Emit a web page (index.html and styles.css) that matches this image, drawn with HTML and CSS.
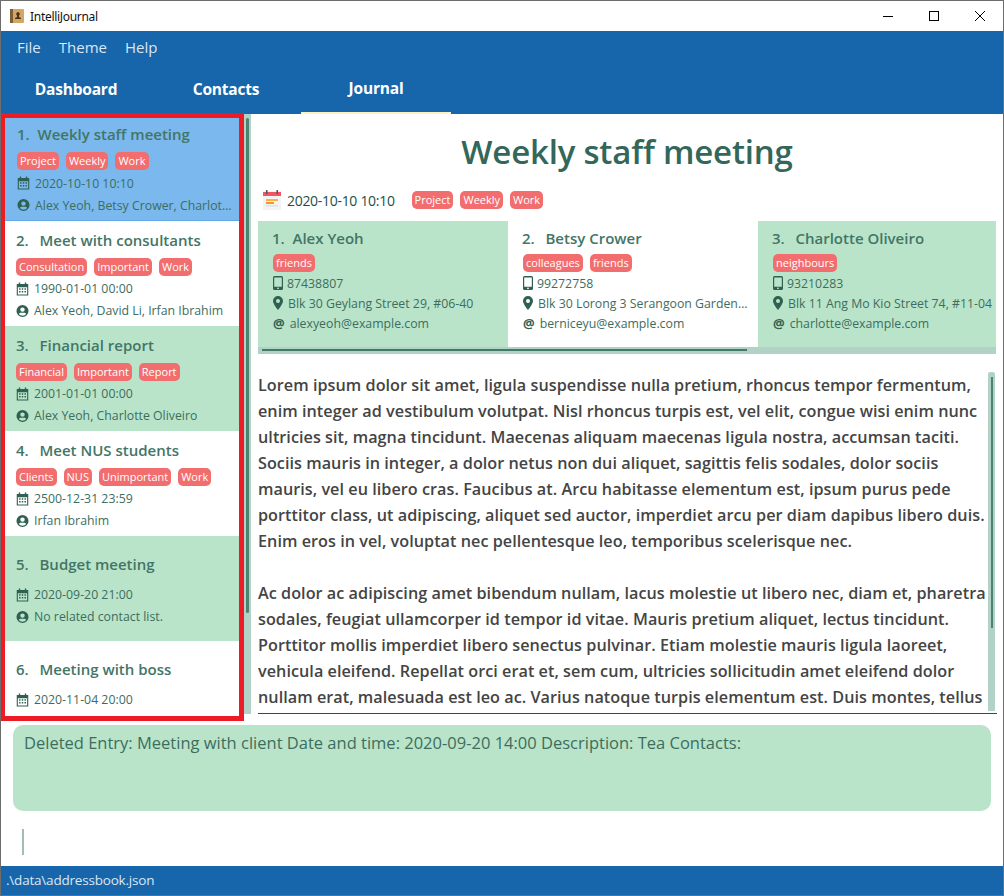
FILE: index.html
```html
<!DOCTYPE html>
<html lang="en">

<head>
    <meta charset="UTF-8">
    <title>IntelliJournal</title>
    <link rel="stylesheet" href="styles.css">
</head>

<body>
    <svg class="defs" width="0" height="0">
        <symbol id="cal" viewBox="0 0 14 14">
            <path fill="currentColor" d="M3 0h1.5v1.5h5V0H11v1.5h2.2V14H.8V1.5H3zM2 5v7.8h10V5z" />
            <path fill="currentColor" d="M3.3 6.3h1.6v1.5H3.3zM6.2 6.3h1.6v1.5H6.2zM9.100 6.300h1.600v1.500H9.100zM3.300 9.200h1.600v1.500H3.300zM6.200 9.200h1.600v1.500H6.200zM9.100 9.200h1.600v1.500H9.100z" />
        </symbol>
        <symbol id="person" viewBox="0 0 14 14">
            <path fill="currentColor" d="M7 .5a6.500 6.500 0 1 0 0 13 6.500 6.500 0 0 0 0-13zm0 2.600a2.400 2.400 0 1 1 0 4.800 2.400 2.400 0 0 1 0-4.800zm0 9.100a5.200 5.200 0 0 1-4-1.900c.5-1 1.500-1.500 2.500-1.500h3c1 0 2 .5 2.500 1.500a5.200 5.200 0 0 1-4 1.900z" />
        </symbol>
        <symbol id="phone" viewBox="0 0 10 14">
            <path fill="currentColor" d="M1.500 0h7A1.500 1.500 0 0 1 10 1.500v11A1.500 1.500 0 0 1 8.500 14h-7A1.500 1.500 0 0 1 0 12.500v-11A1.500 1.500 0 0 1 1.500 0zm-.3 1.500v9.300h7.600V1.500zM5 11.400a.9.900 0 1 0 0 1.800.9.900 0 0 0 0-1.800z" />
        </symbol>
        <symbol id="pin" viewBox="0 0 10 14">
            <path fill="currentColor" d="M5 0a5 5 0 0 1 5 5c0 2.500-3 6.500-5 9-2-2.500-5-6.500-5-9a5 5 0 0 1 5-5zm0 3a2 2 0 1 0 0 4 2 2 0 0 0 0-4z" />
        </symbol>
    </svg>

    <div class="window">
        <header class="titlebar">
            <svg class="appicon" width="14" height="14" viewBox="0 0 14 14">
                <rect width="14" height="14" rx="1" fill="#d4a664" />
                <rect width="3" height="14" fill="#7a6038" />
                <path fill="#4a3518" d="M8 3a2 2 0 0 1 1 3.600V8l2 1v1H5V9l2-1V6.600A2 2 0 0 1 8 3z" />
            </svg>
            <span class="apptitle">IntelliJournal</span>
            <div class="winbtns">
                <svg width="46" height="30" viewBox="0 0 46 30"><path stroke="#000" d="M18 15.500h10" /></svg>
                <svg width="46" height="30" viewBox="0 0 46 30"><rect x="18.500" y="10.500" width="9" height="9" fill="none" stroke="#000" /></svg>
                <svg width="46" height="30" viewBox="0 0 46 30"><path stroke="#000" d="M18 10l10 10M28 10L18 20" /></svg>
            </div>
        </header>

        <div class="topbar">
            <nav class="menu">
                <span>File</span>
                <span>Theme</span>
                <span>Help</span>
            </nav>
            <nav class="tabs">
                <span class="tab">Dashboard</span>
                <span class="tab">Contacts</span>
                <span class="tab active">Journal</span>
            </nav>
        </div>

        <div class="split">
            <aside class="entries">
                <div class="entry selected">
                    <div class="entry-title"><span class="num one">1.</span>&nbsp; Weekly staff meeting</div>
                    <div class="tags"><span class="tag">Project</span><span class="tag">Weekly</span><span class="tag">Work</span></div>
                    <div class="meta"><svg class="ico"><use href="#cal" /></svg>2020-10-10 10:10</div>
                    <div class="meta"><svg class="ico"><use href="#person" /></svg><span class="clip">Alex Yeoh, Betsy Crower, Charlotte Oliveiro</span></div>
                </div>
                <div class="entry">
                    <div class="entry-title"><span class="num">2.</span>&nbsp; Meet with consultants</div>
                    <div class="tags"><span class="tag">Consultation</span><span class="tag">Important</span><span class="tag">Work</span></div>
                    <div class="meta"><svg class="ico"><use href="#cal" /></svg>1990-01-01 00:00</div>
                    <div class="meta"><svg class="ico"><use href="#person" /></svg><span class="clip">Alex Yeoh, David Li, Irfan Ibrahim</span></div>
                </div>
                <div class="entry green">
                    <div class="entry-title"><span class="num">3.</span>&nbsp; Financial report</div>
                    <div class="tags"><span class="tag">Financial</span><span class="tag">Important</span><span class="tag">Report</span></div>
                    <div class="meta"><svg class="ico"><use href="#cal" /></svg>2001-01-01 00:00</div>
                    <div class="meta"><svg class="ico"><use href="#person" /></svg><span class="clip">Alex Yeoh, Charlotte Oliveiro</span></div>
                </div>
                <div class="entry">
                    <div class="entry-title"><span class="num">4.</span>&nbsp; Meet NUS students</div>
                    <div class="tags"><span class="tag">Clients</span><span class="tag">NUS</span><span class="tag">Unimportant</span><span class="tag">Work</span></div>
                    <div class="meta"><svg class="ico"><use href="#cal" /></svg>2500-12-31 23:59</div>
                    <div class="meta"><svg class="ico"><use href="#person" /></svg><span class="clip">Irfan Ibrahim</span></div>
                </div>
                <div class="entry green">
                    <div class="entry-title"><span class="num">5.</span>&nbsp; Budget meeting</div>
                    <div class="tags"></div>
                    <div class="meta"><svg class="ico"><use href="#cal" /></svg>2020-09-20 21:00</div>
                    <div class="meta"><svg class="ico"><use href="#person" /></svg><span class="clip">No related contact list.</span></div>
                </div>
                <div class="entry">
                    <div class="entry-title"><span class="num">6.</span>&nbsp; Meeting with boss</div>
                    <div class="tags"></div>
                    <div class="meta"><svg class="ico"><use href="#cal" /></svg>2020-11-04 20:00</div>
                    <div class="meta"><svg class="ico"><use href="#person" /></svg></div>
                </div>
            </aside>

            <div class="vbar">
                <div class="vbar-thumb"></div>
            </div>

            <main class="detail">
                <h1 class="detail-title">Weekly staff meeting</h1>
                <div class="detail-when">
                    <svg class="calcolor" width="18" height="20" viewBox="0 0 18 20">
                        <rect y="1" width="18" height="19" fill="#f3f3f3" />
                        <rect y="2" width="18" height="4" fill="#ef5566" />
                        <rect x="3" width="1.500" height="4" fill="#44546a" />
                        <rect x="13.500" width="1.500" height="4" fill="#44546a" />
                        <rect x="3" y="9" width="12" height="2" fill="#fbb040" />
                        <rect x="3" y="12" width="8" height="2" fill="#f59331" />
                        <rect x="3" y="15" width="12" height="1.500" fill="#e2e2e2" />
                    </svg>
                    <span class="when-text">2020-10-10 10:10</span>
                    <div class="tags when-tags"><span class="tag">Project</span><span class="tag">Weekly</span><span class="tag">Work</span></div>
                </div>

                <div class="contacts">
                    <div class="cards">
                        <div class="card green">
                            <div class="card-name"><span class="num one">1.</span>&nbsp; Alex Yeoh</div>
                            <div class="tags"><span class="tag">friends</span></div>
                            <div class="meta"><svg class="ico ico-phone"><use href="#phone" /></svg>87438807</div>
                            <div class="meta"><svg class="ico ico-pin"><use href="#pin" /></svg>Blk 30 Geylang Street 29, #06-40</div>
                            <div class="meta"><b class="at">@</b>alexyeoh@example.com</div>
                        </div>
                        <div class="card">
                            <div class="card-name"><span class="num">2.</span>&nbsp; Betsy Crower</div>
                            <div class="tags"><span class="tag">colleagues</span><span class="tag">friends</span></div>
                            <div class="meta"><svg class="ico ico-phone"><use href="#phone" /></svg>99272758</div>
                            <div class="meta"><svg class="ico ico-pin"><use href="#pin" /></svg><span class="clip">Blk 30 Lorong 3 Serangoon Gardens, #07-18</span></div>
                            <div class="meta"><b class="at">@</b>berniceyu@example.com</div>
                        </div>
                        <div class="card green">
                            <div class="card-name"><span class="num">3.</span>&nbsp; Charlotte Oliveiro</div>
                            <div class="tags"><span class="tag">neighbours</span></div>
                            <div class="meta"><svg class="ico ico-phone"><use href="#phone" /></svg>93210283</div>
                            <div class="meta"><svg class="ico ico-pin"><use href="#pin" /></svg>Blk 11 Ang Mo Kio Street 74, #11-04</div>
                            <div class="meta"><b class="at">@</b>charlotte@example.com</div>
                        </div>
                    </div>
                    <div class="hbar">
                        <div class="hbar-thumb"></div>
                    </div>
                </div>

                <div class="notes">
                    <div class="notes-text">
                        <div>Lorem ipsum dolor sit amet, ligula suspendisse nulla pretium, rhoncus tempor fermentum,</div>
                        <div>enim integer ad vestibulum volutpat. Nisl rhoncus turpis est, vel elit, congue wisi enim nunc</div>
                        <div>ultricies sit, magna tincidunt. Maecenas aliquam maecenas ligula nostra, accumsan taciti.</div>
                        <div>Sociis mauris in integer, a dolor netus non dui aliquet, sagittis felis sodales, dolor sociis</div>
                        <div>mauris, vel eu libero cras. Faucibus at. Arcu habitasse elementum est, ipsum purus pede</div>
                        <div>porttitor class, ut adipiscing, aliquet sed auctor, imperdiet arcu per diam dapibus libero duis.</div>
                        <div>Enim eros in vel, voluptat nec pellentesque leo, temporibus scelerisque nec.</div>
                        <div>&nbsp;</div>
                        <div>Ac dolor ac adipiscing amet bibendum nullam, lacus molestie ut libero nec, diam et, pharetra</div>
                        <div>sodales, feugiat ullamcorper id tempor id vitae. Mauris pretium aliquet, lectus tincidunt.</div>
                        <div>Porttitor mollis imperdiet libero senectus pulvinar. Etiam molestie mauris ligula laoreet,</div>
                        <div>vehicula eleifend. Repellat orci erat et, sem cum, ultricies sollicitudin amet eleifend dolor</div>
                        <div>nullam erat, malesuada est leo ac. Varius natoque turpis elementum est. Duis montes, tellus</div>
                    </div>
                    <div class="notes-bar">
                        <div class="notes-thumb"></div>
                    </div>
                </div>
            </main>
        </div>

        <div class="result">Deleted Entry: Meeting with client Date and time: 2020-09-20 14:00 Description: Tea Contacts:</div>

        <div class="command">
            <div class="caret"></div>
        </div>

        <footer class="status">.\data\addressbook.json</footer>

        <!-- red annotation box -->
        <div class="redbox"></div>
    </div>
</body>

</html>
```

FILE: styles.css
```css
* {
    box-sizing: border-box;
}

html,
body {
    margin: 0;
    height: 100%;
}

body {
    font-family: "Open Sans", "Noto Sans", sans-serif;
    overflow: hidden;
}

.defs {
    position: absolute;
}

.window {
    position: relative;
    width: 1004px;
    height: 896px;
    display: flex;
    flex-direction: column;
    border: 1px solid #6d6d6d;
    background: white;
    overflow: hidden;
}

/* title bar */
.titlebar {
    height: 30px;
    flex: none;
    display: flex;
    align-items: center;
    padding-left: 9px;
    background: white;
}

.apptitle {
    margin-left: 6px;
    font-family: "Noto Sans", sans-serif;
    font-size: 12px;
    letter-spacing: -0.3px;
    color: #111;
}

.winbtns {
    margin-left: auto;
    display: flex;
}

/* menu + tabs */
.topbar {
    height: 83px;
    flex: none;
    background: #1766ab;
    color: white;
}

.menu {
    height: 33px;
    display: flex;
    align-items: center;
    gap: 18px;
    padding-left: 16px;
    padding-bottom: 2px;
    font-size: 15px;
    color: #dbe7f2;
}

.tabs {
    height: 50px;
    display: flex;
}

.tab {
    width: 150px;
    display: flex;
    align-items: center;
    justify-content: center;
    font-size: 15.500px;
    font-weight: 700;
    letter-spacing: -0.2px;
}

.tab.active {
    border-bottom: 2px solid #fdf2c0;
}

/* main split */
.split {
    height: 600px;
    flex: none;
    display: flex;
}

.entries {
    width: 243px;
    flex: none;
    padding-left: 4px;
    padding-right: 5px;
    padding-top: 2px;
    overflow: hidden;
}

.entry {
    height: 105px;
    padding-top: 3px;
    padding-left: 11px;
    padding-right: 6px;
    display: flex;
    flex-direction: column;
    justify-content: center;
    color: #437566;
    background: white;
}

.entry.green,
.card.green {
    background: #b9e4c9;
}

.entry.selected {
    padding-left: 12px;
    background: #7ab8ed;
    border-bottom: 1px solid #5fa8ea;
}

.entry-title {
    font-size: 15px;
    font-weight: 600;
    line-height: 22px;
    white-space: nowrap;
    margin-bottom: 7px;
}

.num {
    margin-right: 3px;
}

.num.one {
    margin-right: 0;
}

.tags {
    display: flex;
    gap: 7px;
}

.tag {
    height: 18px;
    line-height: 18px;
    padding: 0 3px;
    border-radius: 5px;
    background: #f26d6d;
    color: white;
    font-size: 11px;
    white-space: nowrap;
}

.meta {
    height: 22px;
    display: flex;
    align-items: center;
    font-size: 12.300px;
    white-space: nowrap;
    color: #3d6d5e;
}

.entry .tags + .meta {
    margin-top: 2px;
}

.ico {
    width: 13px;
    height: 14px;
    flex: none;
    margin-right: 5px;
    color: #2f6152;
}

.ico-phone {
    width: 10px;
    margin-right: 4px;
}

.ico-pin {
    width: 10px;
}

.at {
    font-size: 13px;
    margin-right: 5px;
    color: #2f6152;
}

.clip {
    overflow: hidden;
    text-overflow: ellipsis;
}

.vbar {
    width: 7px;
    flex: none;
    padding: 4px 2px 0;
    background: #b2d2c8;
}

.vbar-thumb {
    height: 495px;
    background: #4d8271;
    border-radius: 2px;
}

/* detail pane */
.detail {
    flex: 1;
    min-width: 0;
    padding: 0 7px;
    display: flex;
    flex-direction: column;
}

.detail-title {
    margin: 0;
    height: 76px;
    line-height: 76px;
    text-align: center;
    font-size: 33px;
    font-weight: 600;
    letter-spacing: -0.2px;
    color: #33675a;
}

.detail-when {
    height: 31px;
    display: flex;
    align-items: center;
    padding-left: 5px;
    padding-bottom: 11px;
}

.when-text {
    margin-left: 6px;
    font-size: 14px;
    letter-spacing: -0.3px;
    color: #234f47;
}

.when-tags {
    margin-left: 17px;
}

.contacts {
    height: 133px;
    flex: none;
    display: flex;
    flex-direction: column;
    overflow: hidden;
}

.cards {
    height: 126px;
    flex: none;
    display: flex;
}

.card {
    width: 250px;
    flex: none;
    padding: 5px 8px 0 15px;
    overflow: hidden;
    background: white;
}

.card-name {
    font-size: 15px;
    font-weight: 600;
    line-height: 24px;
    margin-left: -1px;
    margin-bottom: 4px;
    color: #437566;
    white-space: nowrap;
}

.card .tags {
    margin-bottom: 1px;
}

.card .meta {
    height: 20px;
}

.hbar {
    height: 7px;
    padding: 2px 0 0 4px;
    background: #b2d2c8;
}

.hbar-thumb {
    width: 485px;
    height: 2px;
    background: #427a68;
}

.notes {
    height: 360px;
    flex: none;
    padding-top: 18px;
    display: flex;
    border-bottom: 1px solid #444;
    margin-right: -1px;
}

.notes-text {
    flex: 1;
    min-width: 0;
    height: 339px;
    overflow: hidden;
    font-size: 16.200px;
    font-weight: 600;
    line-height: 26px;
    letter-spacing: 0.04px;
    white-space: nowrap;
    color: #444;
}

.notes-bar {
    width: 7px;
    height: 339px;
    flex: none;
    margin-right: 2px;
    padding: 5px 2px 0 3px;
    border-radius: 2px 2px 0 0;
    background: #b2d2c8;
}

.notes-thumb {
    height: 251px;
    background: #4d8271;
}

/* bottom */
.result {
    height: 86px;
    flex: none;
    margin: 11px 12px 0;
    padding: 7px 11px;
    border-radius: 10px;
    background: #b9e4c9;
    color: #3d6d5e;
    font-size: 16.500px;
    line-height: 22px;
}

.command {
    height: 55px;
    flex: none;
    padding: 18px 0 0 21px;
}

.caret {
    width: 2px;
    height: 26px;
    background: #a2bdb3;
}

.status {
    height: 29px;
    flex: none;
    padding-left: 5px;
    line-height: 29px;
    background: #1766ab;
    color: #dbe7f2;
    font-size: 13.500px;
    letter-spacing: -0.2px;
}

.redbox {
    position: absolute;
    left: -1px;
    top: 112px;
    width: 244px;
    height: 608px;
    border: 5px solid #ed1c24;
    pointer-events: none;
}
```
